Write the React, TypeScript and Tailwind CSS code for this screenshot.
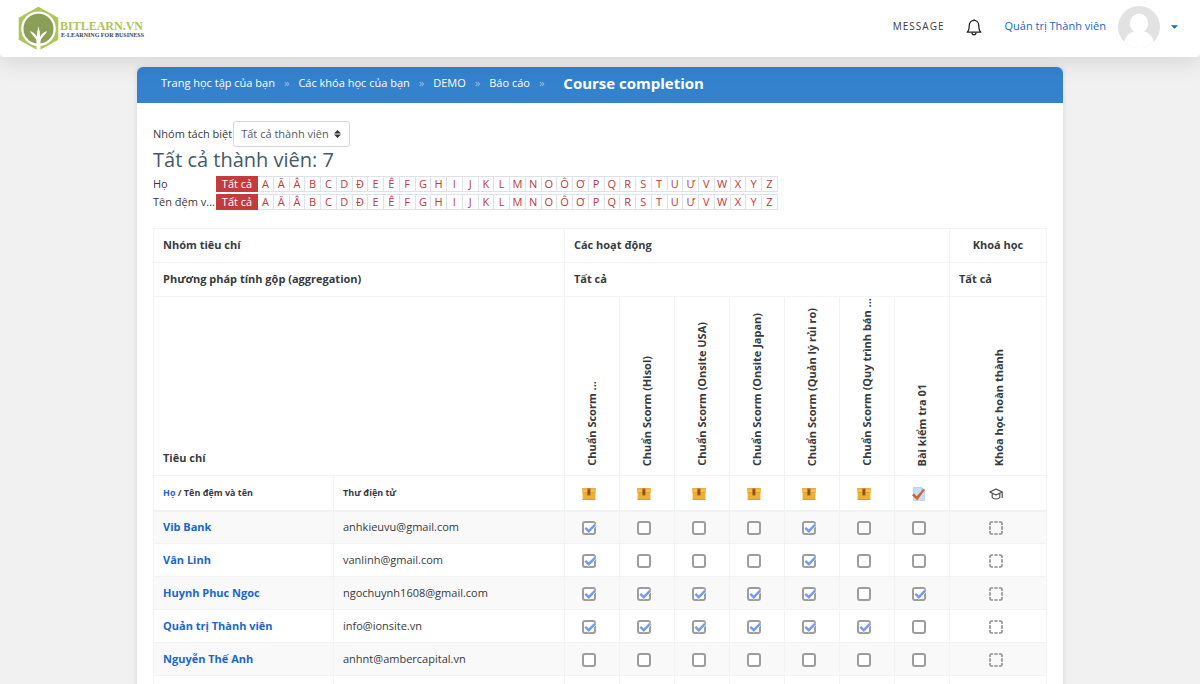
import { ReactNode } from "react";

const letters = "A Ă Â B C D Đ E Ê F G H I J K L M N O Ô Ơ P Q R S T U Ư V W X Y Z".split(" ");

const activities = [
  "Chuẩn Scorm ...",
  "Chuẩn Scorm (Hisol)",
  "Chuẩn Scorm (Onsite USA)",
  "Chuẩn Scorm (Onsite Japan)",
  "Chuẩn Scorm (Quản lý rủi ro)",
  "Chuẩn Scorm (Quy trình bán ...",
  "Bài kiểm tra 01",
];

const members = [
  { name: "Vib Bank", email: "anhkieuvu@gmail.com", done: [1, 0, 0, 0, 1, 0, 0] },
  { name: "Vân Linh", email: "vanlinh@gmail.com", done: [1, 0, 0, 0, 1, 0, 0] },
  { name: "Huynh Phuc Ngoc", email: "ngochuynh1608@gmail.com", done: [1, 1, 1, 1, 1, 0, 1] },
  { name: "Quản trị Thành viên", email: "info@ionsite.vn", done: [1, 1, 1, 1, 1, 1, 0] },
  { name: "Nguyễn Thế Anh", email: "anhnt@ambercapital.vn", done: [0, 0, 0, 0, 0, 0, 0] },
];

const cell = "border border-[#f2f3f4] px-[9px] text-left";
const iconCell = "border border-[#f2f3f4] pr-[5px] text-center";

function LogoMark() {
  return (
    <svg width="41" height="45" viewBox="0 0 41 45" aria-hidden="true">
      <path d="M20.500.700 40.300 11.700v22L20.500 44.700.700 33.700v-22z" fill="#aec45c" />
      <circle cx="20.500" cy="22.700" r="17.300" fill="#fff" />
      <circle cx="20.500" cy="22.700" r="15" fill="#8b9f56" />
      <path d="M18.500 45v-9.500c-.2-4-4.700-5.800-6.500-10.500 3.200 1 5.500 3 6.900 5.800.1-3.800.5-7 1.600-10.300 1.100 3.300 1.500 6.500 1.600 10.300 1.400-2.800 3.700-4.800 6.900-5.800-1.800 4.700-6.300 6.500-6.500 10.500V45z" fill="#fff" />
    </svg>
  );
}

function Avatar() {
  return (
    <svg width="42" height="42" viewBox="0 0 42 42" aria-hidden="true">
      <clipPath id="avatar"><circle cx="21" cy="21" r="21" /></clipPath>
      <g clipPath="url(#avatar)">
        <rect width="42" height="42" fill="#e2e2e2" />
        <ellipse cx="21" cy="17.500" rx="9.200" ry="10" fill="#fff" />
        <path d="M5 42c.5-8 4-14 9-16h14c5 2 8.500 8 9 16z" fill="#fff" />
      </g>
    </svg>
  );
}

function Bell() {
  return (
    <svg width="16" height="18" viewBox="0 0 16 18" fill="none" stroke="#222" strokeWidth="1.300" strokeLinejoin="round" aria-hidden="true">
      <path d="M8 1.200v1M1.200 14.200c1.600-1.400 2-2.700 2-6.500C3.200 4.600 5.200 2.300 8 2.300s4.800 2.300 4.800 5.400c0 3.800.4 5.100 2 6.500z" />
      <path d="M6 14.500c0 1.300.8 2.300 2 2.300s2-1 2-2.300" />
    </svg>
  );
}

function PackageIcon() {
  return (
    <svg className="inline-block" width="14" height="14" viewBox="0 0 14 14" aria-hidden="true">
      <rect x=".6" y="5" width="12.800" height="8" fill="#edb034" />
      <rect x=".6" y="12" width="12.800" height="1" fill="#dd9a3c" />
      <rect x="0" y="1.200" width="14" height="4.300" rx=".8" fill="#f3c04a" />
      <rect x="0" y="1.200" width="14" height="1" rx=".5" fill="#dfa14a" />
      <path d="M.6 5.500h12.800" stroke="#d9952c" strokeWidth=".6" />
      <rect x="5.300" y="1.500" width="3.200" height="7" fill="#a4612a" />
      <rect x="6.300" y="3" width="1.200" height="4.500" fill="#7c4520" />
    </svg>
  );
}

function QuizIcon() {
  return (
    <svg className="inline-block" width="14" height="14" viewBox="0 0 14 14" aria-hidden="true">
      <path d="M1.500.3h8L12.600 3.400v10.300H1.500z" fill="#c6def5" stroke="#a4c6ea" strokeWidth=".6" />
      <path d="M9.500.3v3.100h3.100z" fill="#8fb8e4" />
      <path d="M0 8.200 2 6.400l2.700 2.900L11.500 2l1.500.8-7.700 10.400z" fill="#d4602c" />
    </svg>
  );
}

function CourseIcon() {
  return (
    <svg className="inline-block" width="14" height="14" viewBox="0 0 14 14" fill="none" stroke="#444" strokeWidth="1.100" strokeLinejoin="round" aria-hidden="true">
      <path d="M.7 5 7 2l6.300 3L7 8z" />
      <path d="M3.200 6.500v4c1 1.100 2.300 1.500 3.800 1.500s2.800-.4 3.800-1.500v-4" />
      <path d="M13.200 5.200V11" />
    </svg>
  );
}

function Tick({ checked, label, dashed = false }: { checked: boolean; label: string; dashed?: boolean }) {
  return (
    <span className="inline-grid size-[14px] align-middle">
      <input
        type="checkbox"
        aria-label={label}
        defaultChecked={checked}
        className={
          dashed
            ? "peer col-start-1 row-start-1 size-[14px] appearance-none"
            : "peer col-start-1 row-start-1 size-[14px] appearance-none rounded-[3px] border-2 border-[#9d9d9d] bg-white"
        }
      />
      {dashed ? (
        <svg className="pointer-events-none col-start-1 row-start-1" width="14" height="14" viewBox="0 0 14 14" fill="none" stroke="#8e8e8e" strokeWidth="1.600">
          <path d="M1 4V2.500Q1 1 2.500 1H4M10 1h1.500Q13 1 13 2.500V4M13 10v1.500q0 1.500-1.500 1.500H10M4 13H2.500Q1 13 1 11.500V10M5.300 1h3.400M5.300 13h3.400M1 5.300v3.400M13 5.300v3.400" />
        </svg>
      ) : (
        <svg className="pointer-events-none col-start-1 row-start-1 hidden peer-checked:block" width="14" height="14" viewBox="0 0 14 14" fill="none">
          <path d="m4 7.300 2.800 2.900L13.300 3.400" stroke="#fff" strokeWidth="3.600" />
          <path d="m3.300 6.800 3.500 3.400 6.400-6.600" stroke="#769bee" strokeWidth="2.400" />
        </svg>
      )}
    </span>
  );
}

function InitialsBar({ label, text }: { label: string; text: string }) {
  return (
    <div className="flex h-[18px] items-start">
      <span className="w-[63px] shrink-0 leading-4 whitespace-nowrap" title={label}>{text}</span>
      <nav aria-label={label} className="flex h-4 w-[562px] text-[#c0393b]">
        <a href="#all" className="w-[42px] shrink-0 bg-[#c23b3d] text-center leading-4 text-white">Tất cả</a>
        {letters.map((l) => (
          <a key={l} href={"#" + l} className="flex-1 border-y border-r border-[#dee2e6] text-center leading-[14px]">{l}</a>
        ))}
      </nav>
    </div>
  );
}

function Crumb({ children }: { children: ReactNode }) {
  return (
    <li className="flex items-center">
      <a href="#crumb">{children}</a>
      <span className="mx-[9px] text-[#a3bfdc]">»</span>
    </li>
  );
}

export default function App() {
  return (
    <div className="min-h-screen bg-[#f1f1f1] font-['Open_Sans','Noto_Sans',sans-serif] text-[11px] text-[#373a3c]">
      <header className="relative flex h-[57px] items-center rounded-b bg-white pr-[22px] pl-[18px] shadow-[0_4px_24px_rgba(0,0,0,0.13)]">
        <a href="#home" className="flex items-center gap-px" aria-label="BITLEARN.VN">
          <LogoMark />
          <span className="flex flex-col pt-px font-['Liberation_Serif',serif] font-bold">
            <span className="text-[12px] leading-[12px] text-[#aec45c]">BITLEARN.VN</span>
            <span className="pl-px text-[6px] leading-[7px] text-[#444]">E-LEARNING FOR BUSINESS</span>
          </span>
        </a>
        <div className="ml-auto flex items-center pb-1">
          <a href="#message" className="text-[10px] tracking-[1px]">MESSAGE</a>
          <button type="button" aria-label="Thông báo" className="ml-[22px]"><Bell /></button>
          <button type="button" className="ml-[22px] flex items-center text-[#1b66c9]">
            <span>Quản trị Thành viên</span>
            <span className="ml-3"><Avatar /></span>
            <svg className="ml-[11px]" width="7" height="4" viewBox="0 0 7 4" aria-hidden="true"><path d="M0 .3h7L3.500 3.800z" fill="currentColor" /></svg>
          </button>
        </div>
      </header>

      <main className="mx-auto mt-[10px] max-w-[926px] rounded-md bg-white shadow-[0_0_6px_rgba(0,0,0,0.1)]">
        <nav aria-label="Breadcrumb" className="flex h-9 items-center rounded-t-md bg-[#3482ce] pb-[3px] pl-6 text-white">
          <ol className="flex items-center">
            <Crumb>Trang học tập của bạn</Crumb>
            <Crumb>Các khóa học của bạn</Crumb>
            <Crumb>DEMO</Crumb>
            <Crumb>Báo cáo</Crumb>
          </ol>
          <h1 className="ml-[10px] text-[15px] font-bold">Course completion</h1>
        </nav>

        <div className="px-4 pt-[18px]">
          <div className="flex items-center">
            <label htmlFor="group">Nhóm tách biệt</label>
            <span className="ml-px grid items-center">
              <select id="group" className="col-start-1 row-start-1 h-[26px] w-[117px] appearance-none rounded-[3px] border border-[#d3d6d9] bg-white px-[7px] text-[#555b61]">
                <option>Tất cả thành viên</option>
              </select>
              <svg className="pointer-events-none col-start-1 row-start-1 mr-[9px] justify-self-end" width="7" height="8" viewBox="0 0 7 8" aria-hidden="true">
                <path d="M3.500 0 7 3.400H0zM3.500 8 0 4.600h7z" fill="#333" />
              </svg>
            </span>
          </div>
          <h2 className="text-[20px] leading-[26px] text-[#455a64]">Tất cả thành viên: 7</h2>
          <div className="mt-[3px]">
            <InitialsBar label="Họ" text="Họ" />
            <InitialsBar label="Tên đệm và tên" text="Tên đệm v..." />
          </div>

          <table className="mt-4 w-full table-fixed border-collapse">
            <colgroup>
              <col className="w-[180px]" />
              <col />
              {activities.map((a) => <col key={a} className="w-[55px]" />)}
              <col className="w-[97px]" />
            </colgroup>
            <thead>
              <tr className="h-[34px]">
                <th colSpan={2} className={cell}>Nhóm tiêu chí</th>
                <th colSpan={7} className={cell}>Các hoạt động</th>
                <th className="border border-[#f2f3f4] text-center">Khoá học</th>
              </tr>
              <tr className="h-[34px]">
                <th colSpan={2} className={cell}>Phương pháp tính gộp (aggregation)</th>
                <th colSpan={7} className={cell}>Tất cả</th>
                <th className={cell}>Tất cả</th>
              </tr>
              <tr className="h-[179px] align-bottom">
                <th colSpan={2} className="border border-[#f2f3f4] px-[9px] pb-[9px] text-left">Tiêu chí</th>
                {[...activities, "Khóa học hoàn thành"].map((a) => (
                  <th key={a} className="border border-[#f2f3f4] pb-[9px]">
                    <span className="inline-block rotate-180 text-left align-bottom leading-[15px] whitespace-nowrap [writing-mode:vertical-rl]">{a}</span>
                  </th>
                ))}
              </tr>
              <tr className="h-[35px] border-b-2 border-[#f2f3f4]">
                <th className="border border-[#f2f3f4] px-[9px] text-left text-[9px]"><a href="#ho" className="text-[#1b66c9]">Họ</a> / Tên đệm và tên</th>
                <th className="border border-[#f2f3f4] px-[9px] text-left text-[9px]">Thư điện tử</th>
                {activities.map((a, i) => (
                  <th key={a} className={iconCell}>{i < 6 ? <PackageIcon /> : <QuizIcon />}</th>
                ))}
                <th className={iconCell}><CourseIcon /></th>
              </tr>
            </thead>
            <tbody>
              {members.map((m) => (
                <tr key={m.name} className="h-[33px] odd:bg-[#f9f9f9]">
                  <th scope="row" className={cell}><a href="#member" className="text-[#1b66c9]">{m.name}</a></th>
                  <td className={cell}>{m.email}</td>
                  {m.done.map((d, i) => (
                    <td key={i} className={iconCell}><Tick checked={d === 1} label={m.name + ", " + activities[i]} /></td>
                  ))}
                  <td className={iconCell}><Tick dashed checked={false} label={m.name + ", Khóa học hoàn thành"} /></td>
                </tr>
              ))}
              <tr className="h-[33px]">
                {[...activities, "a", "b", "c"].map((a) => <td key={a} className={cell} />)}
              </tr>
            </tbody>
          </table>
        </div>
      </main>
    </div>
  );
}
